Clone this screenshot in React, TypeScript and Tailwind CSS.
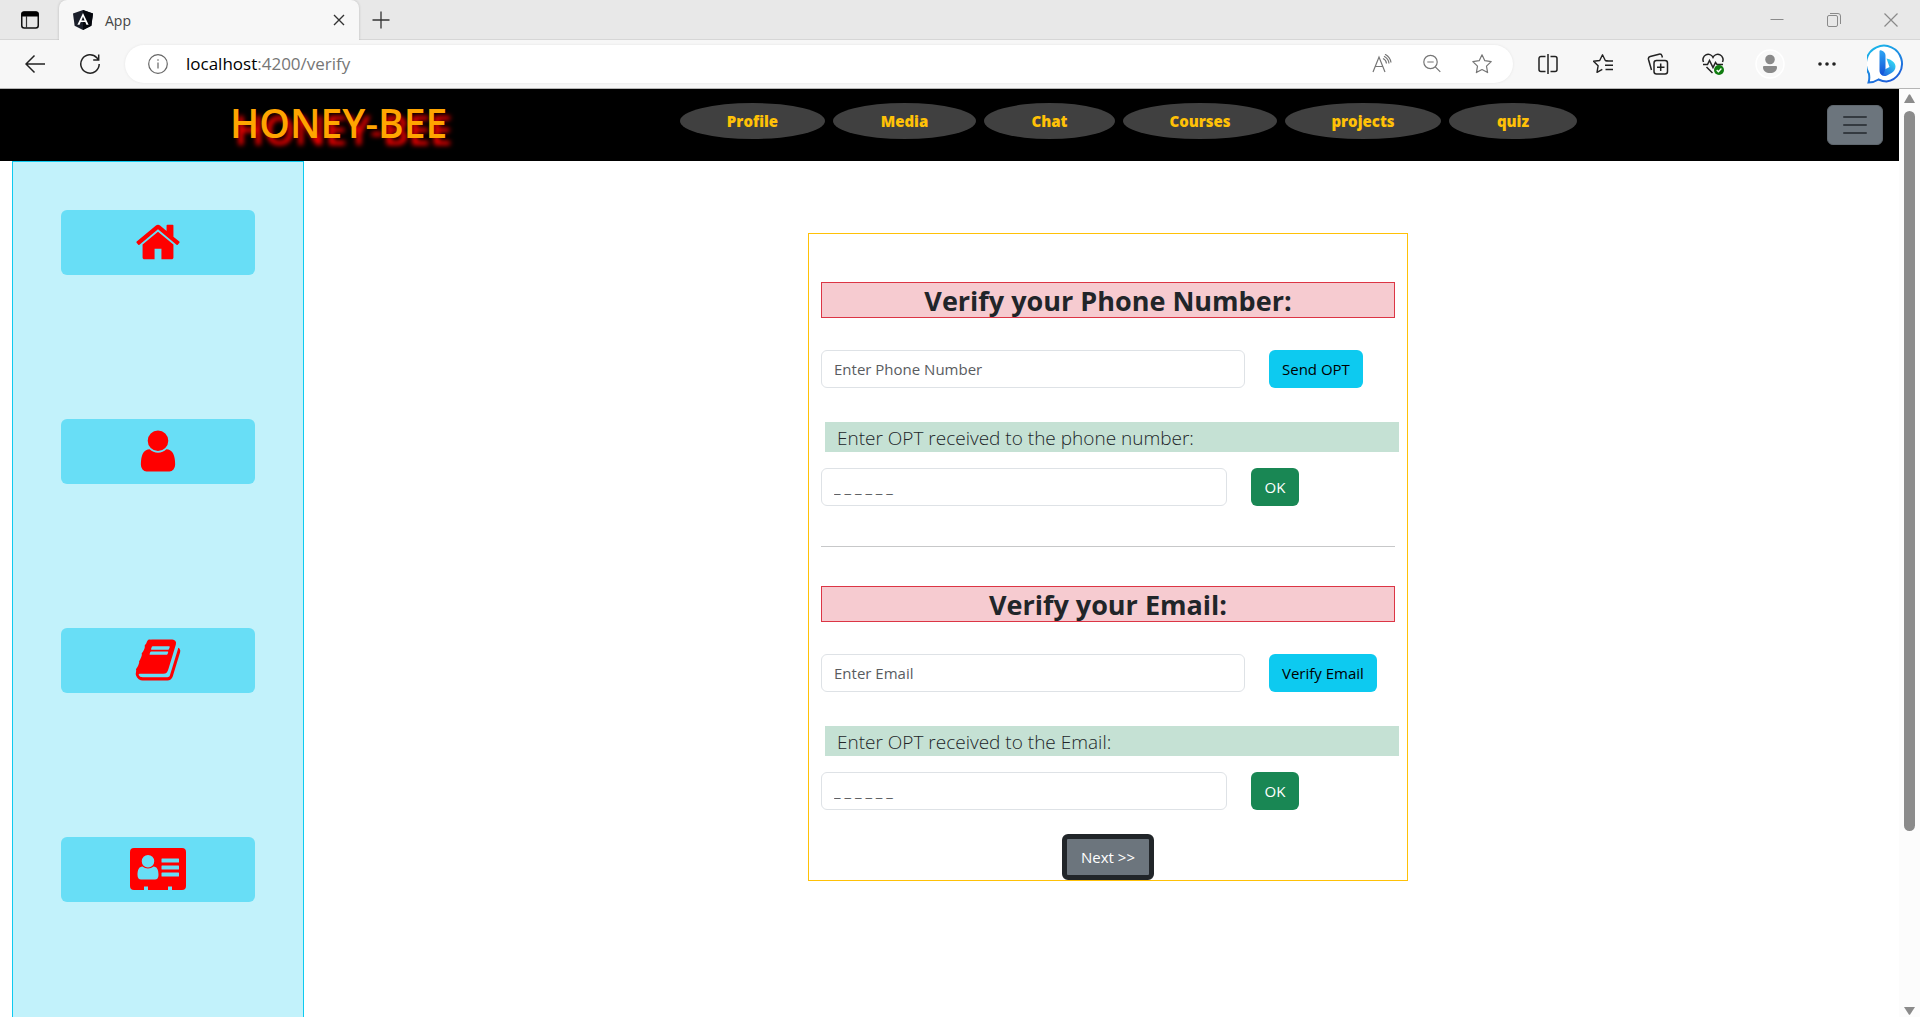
import { useState, type ReactNode } from 'react';

const navItems = [
  { label: 'Profile', width: 'w-[145px]' },
  { label: 'Media', width: 'w-[143px]' },
  { label: 'Chat', width: 'w-[131px]' },
  { label: 'Courses', width: 'w-[154px]' },
  { label: 'projects', width: 'w-[156px]' },
  { label: 'quiz', width: 'w-[128px]' },
];

function IconButton({ label, className = '', children }: { label: string; className?: string; children: ReactNode }) {
  return (
    <button type="button" aria-label={label} className={`flex shrink-0 items-center justify-center ${className}`}>
      {children}
    </button>
  );
}

function TabStrip() {
  return (
    <div className="flex h-10 items-stretch bg-[#e8e8e8]">
      <IconButton label="Tab actions" className="w-[59px] border-b border-[#d6d6d6]">
        <svg width="18" height="18" viewBox="0 0 18 18" fill="none">
          <rect x="0.75" y="1" width="16.5" height="16" rx="2.5" stroke="#111" strokeWidth="1.5" />
          <path d="M0.5 5.5V3A2.5 2.5 0 0 1 3 0.5h12A2.5 2.5 0 0 1 17.5 3v2.5z" fill="#000" />
          <path d="M5.5 5v12" stroke="#333" strokeWidth="1.2" />
        </svg>
      </IconButton>
      <div className="flex w-[300px] items-center rounded-t-lg bg-[#f7f7f7] px-3 shadow-[0_0_3px_rgba(0,0,0,0.2)] [clip-path:inset(0_-4px_0_-4px)]">
        <svg width="24" height="20" viewBox="0 0 24 20">
          <path d="M12 0l10 3.4-1.6 12.4L12 20l-8.4-4.2L2 3.4z" fill="#1b1f2a" />
          <path d="M12 0l10 3.4-1.6 12.4L12 20z" fill="#05070d" />
          <path d="M12 3L6.400 14.800h2.200l1.100-2.700h4.600l1.100 2.700h2.200zm0 3.800l1.600 3.600h-3.200z" fill="#fff" />
        </svg>
        <span className="ml-2.5 flex-1 font-['Open_Sans',sans-serif] text-[14px] text-[#444]">App</span>
        <IconButton label="Close tab" className="size-4">
          <svg width="12" height="12" viewBox="0 0 12 12" stroke="#333" strokeWidth="1.4">
            <path d="M1 1l10 10M11 1L1 11" />
          </svg>
        </IconButton>
      </div>
      <div className="flex flex-1 items-center border-b border-[#d6d6d6]">
        <IconButton label="New tab" className="ml-3 size-5">
          <svg width="18" height="18" viewBox="0 0 18 18" stroke="#333" strokeWidth="1.3">
            <path d="M9 0.500v17M0.500 9h17" />
          </svg>
        </IconButton>
        <div className="ml-auto flex items-center gap-[43px] pr-[22px]">
          <IconButton label="Minimize" className="size-[14px]">
            <svg width="14" height="14" viewBox="0 0 14 14" stroke="#8a8a8a">
              <path d="M0.500 6.500h13" />
            </svg>
          </IconButton>
          <IconButton label="Restore" className="size-[14px]">
            <svg width="14" height="14" viewBox="0 0 14 14" fill="none" stroke="#8a8a8a">
              <rect x="0.500" y="2.500" width="10" height="11" rx="1.500" />
              <path d="M3 0.500H11A2.500 2.500 0 0 1 13.500 3v8" />
            </svg>
          </IconButton>
          <IconButton label="Close" className="size-[14px]">
            <svg width="14" height="14" viewBox="0 0 14 14" stroke="#8a8a8a" strokeWidth="1.2">
              <path d="M0.500 0.500l13 13M13.500 0.500l-13 13" />
            </svg>
          </IconButton>
        </div>
      </div>
    </div>
  );
}

function Toolbar() {
  const [url, setUrl] = useState('localhost:4200/verify');
  const split = url.indexOf(':');
  return (
    <div className="flex h-[49px] items-center border-b border-[#b5b5b5] bg-[#f7f7f7]">
      <IconButton label="Back" className="ml-6 size-[22px]">
        <svg width="20" height="20" viewBox="0 0 20 20" fill="none" stroke="#222" strokeWidth="1.5">
          <path d="M20 10H1M9.500 1.500L1 10l8.500 8.500" />
        </svg>
      </IconButton>
      <IconButton label="Refresh" className="ml-[33px] size-[22px]">
        <svg width="22" height="22" viewBox="0 0 22 22" fill="none" stroke="#222" strokeWidth="1.5">
          <path d="M20.200 11A9.200 9.200 0 1 1 17.800 4.800L19.500 6.800M19.700 1.500v5.500h-5.500" />
        </svg>
      </IconButton>
      <div className="ml-6 flex h-[38px] flex-1 items-center rounded-full bg-white pr-[21px] pl-[22px] shadow-[0_0_3px_rgba(0,0,0,0.08)]">
        <IconButton label="Site information" className="size-[22px]">
          <svg width="20" height="20" viewBox="0 0 20 20" fill="none" stroke="#666" strokeWidth="1.2">
            <circle cx="10" cy="10" r="9.3" />
            <path d="M10 8.500V14.500M10 5.300v1.500" />
          </svg>
        </IconButton>
        <div className="relative ml-[17px] h-6 flex-1 font-['Open_Sans',sans-serif] text-[17px] leading-6">
          <span aria-hidden="true" className="text-black">{url.slice(0, split)}</span>
          <span aria-hidden="true" className="text-[#767676]">{url.slice(split)}</span>
          <input
            aria-label="Address"
            value={url}
            onChange={(e) => setUrl(e.target.value)}
            className="absolute inset-0 w-full bg-transparent text-transparent caret-black outline-none"
          />
        </div>
        <div className="flex items-center gap-[30px]">
          <IconButton label="Read aloud" className="size-5">
            <svg width="20" height="20" viewBox="0 0 20 20" fill="none" stroke="#767676" strokeWidth="1.2">
              <path d="M1 18L7 3l6 15M3.200 12.500h7.600" />
              <path d="M11 4.500a6 6 0 0 1 3.500 5M12 2.200a9 9 0 0 1 5 7.300M13 0.300a11 11 0 0 1 6 8.200" />
            </svg>
          </IconButton>
          <IconButton label="Zoom out" className="size-5">
            <svg width="20" height="20" viewBox="0 0 20 20" fill="none" stroke="#767676" strokeWidth="1.2">
              <circle cx="8.500" cy="8" r="6.700" />
              <path d="M13.300 12.800l5 5M5.300 8h6.400" />
            </svg>
          </IconButton>
          <IconButton label="Add to favorites" className="size-5">
            <svg width="20" height="20" viewBox="0 0 20 20" fill="none" stroke="#767676" strokeWidth="1.2" strokeLinejoin="round">
              <path d="M10 0.800l2.800 5.900 6.400.9-4.700 4.500 1.100 6.500L10 15.500l-5.600 3.100 1.100-6.500L.8 7.600l6.400-.9z" />
            </svg>
          </IconButton>
        </div>
      </div>
      <div className="ml-[25px] flex items-center gap-[35px]">
        <IconButton label="Split screen" className="size-5">
          <svg width="20" height="20" viewBox="0 0 20 20" fill="none" stroke="#222" strokeWidth="1.5">
            <path d="M7.500 2.500H3A2 2 0 0 0 1 4.500v11a2 2 0 0 0 2 2h4.500M12.500 2.500H17a2 2 0 0 1 2 2v11a2 2 0 0 1-2 2h-4.500M10 0v20" />
          </svg>
        </IconButton>
        <IconButton label="Favorites" className="size-5">
          <svg width="20" height="20" viewBox="0 0 20 20" fill="none" stroke="#222" strokeWidth="1.4" strokeLinejoin="round">
            <path d="M15.500 7l-3.200-.5L9.500.8 6.700 6.500.5 7.300l4.600 4.500-1.100 6.500 5.300-2.900M12.500 7h7.500M12 11.300h8M12.500 15.500h7.500" />
          </svg>
        </IconButton>
        <IconButton label="Collections" className="size-5">
          <svg width="22" height="22" viewBox="0 0 22 22" fill="none" stroke="#222" strokeWidth="1.5" className="shrink-0">
            <rect x="7" y="7.500" width="13.500" height="13.500" rx="2.500" />
            <path d="M13.700 10.500v7.500M10 14.200h7.500M4.500 17L1.500 6.500a2.500 2.500 0 0 1 1.700-3L12 1.200a2.500 2.500 0 0 1 3 1.700l.4 1.600" />
          </svg>
        </IconButton>
        <IconButton label="Browser essentials" className="size-5">
          <svg width="22" height="22" viewBox="0 0 22 22" fill="none" stroke="#222" strokeWidth="1.5" className="shrink-0">
            <path d="M1.500 9A5 5 0 0 1 11 4.300 5 5 0 0 1 20.500 9M1 11.500h4.500l2-4 3.500 7 2.500-5 1.500 2h6M4.500 14l6 6" />
            <circle cx="17" cy="17" r="5" fill="#107c10" stroke="none" />
            <path d="M14.700 17l1.700 1.700 3-3.200" stroke="#fff" strokeWidth="1.3" />
          </svg>
        </IconButton>
        <IconButton label="Account" className="ml-0.5 size-5">
          <svg width="30" height="30" viewBox="0 0 30 30" className="shrink-0">
            <circle cx="15" cy="15" r="14" fill="#f9f9f9" stroke="#fff" strokeWidth="1.5" />
            <circle cx="15" cy="10.500" r="4.800" fill="#8a8a8a" />
            <path d="M9 17h12a1 1 0 0 1 1 1c0 4-3 6-7 6s-7-2-7-6a1 1 0 0 1 1-1z" fill="#8a8a8a" />
          </svg>
        </IconButton>
        <IconButton label="Settings and more" className="ml-0.5 size-5">
          <svg width="18" height="4" viewBox="0 0 18 4" fill="#222">
            <circle cx="2" cy="2" r="1.800" />
            <circle cx="9" cy="2" r="1.800" />
            <circle cx="16" cy="2" r="1.800" />
          </svg>
        </IconButton>
      </div>
      <IconButton label="Bing" className="mr-3.5 ml-[30px] h-[42px] w-[39px]">
        <svg width="39" height="42" viewBox="0 0 39 42" fill="none">
          <defs>
            <linearGradient id="bubble" x1="8" y1="2" x2="30" y2="40" gradientUnits="userSpaceOnUse">
              <stop stopColor="#1bb8ea" />
              <stop offset="1" stopColor="#1f52d8" />
            </linearGradient>
            <linearGradient id="stem" x1="14" y1="8" x2="16" y2="32" gradientUnits="userSpaceOnUse">
              <stop stopColor="#2ba4f4" />
              <stop offset="1" stopColor="#1450d6" />
            </linearGradient>
            <linearGradient id="bowl" x1="28" y1="18" x2="16" y2="32" gradientUnits="userSpaceOnUse">
              <stop stopColor="#35dcf5" />
              <stop offset="1" stopColor="#2066e0" />
            </linearGradient>
          </defs>
          <path d="M1.500 39.500c1-3 1-6 .4-9A18 18 0 1 1 19.500 38.500c-3 0-5.500-.8-8-2-3 2-6.500 3-10 3z" fill="#fff" stroke="url(#bubble)" strokeWidth="2" />
          <path d="M19.500 15.500c5 1 9 4 9 8 0 3-1.500 5-4 6.500L20 32.500c-4 1.500-7-.5-7-3.500l9.500-5z" fill="url(#bowl)" />
          <path d="M12.500 8.200c0-1 1-1.200 2-.7 2.500 1 4 2.500 4 5V26l-2.500 6c-2-.5-3.500-2-3.500-4z" fill="url(#stem)" />
        </svg>
      </IconButton>
    </div>
  );
}

function SiteHeader() {
  return (
    <header className="flex h-[72px] items-start bg-black pr-4 pl-[230px]">
      <h1 className="w-[450px] pt-2 font-['Open_Sans',sans-serif] text-[39px] leading-[52px] font-semibold text-[#ffa500] [text-shadow:5px_7px_5px_#ff0000]">
        HONEY-BEE
      </h1>
      <nav className="flex gap-2 pt-[14px]">
        {navItems.map((item) => (
          <a
            key={item.label}
            href={`#${item.label.toLowerCase()}`}
            className={`flex h-9 items-center justify-center rounded-[50%] bg-[#404040] font-['Open_Sans',sans-serif] text-[15px] font-extrabold text-[#ffc107] ${item.width}`}
          >
            {item.label}
          </a>
        ))}
      </nav>
      <button type="button" aria-label="Toggle menu" className="mt-4 ml-auto flex h-10 w-14 items-center justify-center rounded-md border border-[#5f676e] bg-[#6c757d]">
        <svg width="24" height="18" viewBox="0 0 24 18" stroke="#343a40" strokeWidth="2" strokeLinecap="round">
          <path d="M1 1h22M1 9h22M1 17h22" />
        </svg>
      </button>
    </header>
  );
}

const shortcuts = [
  {
    label: 'Home',
    icon: (
      <path d="M1472 992v480q0 26-19 45t-45 19h-384v-384h-256v384h-384q-26 0-45-19t-19-45v-480q0-1 .5-3t.5-3l575-474 575 474q1 2 1 6zm223-69l-62 74q-8 9-21 11h-3q-13 0-21-7l-692-577-692 577q-12 8-24 7-13-2-21-11l-62-74q-8-10-7-23.5t11-21.5l719-599q32-26 76-26t76 26l244 204v-195q0-14 9-23t23-9h192q14 0 23 9t9 23v408l219 182q10 8 11 21.5t-7 23.5z" />
    ),
  },
  {
    label: 'User',
    icon: (
      <path d="M1536 1399q0 109-62.5 187t-150.5 78h-854q-88 0-150.5-78t-62.5-187q0-85 8.5-160.5t31.5-152 58.5-131 94-89 134.5-34.5q131 128 313 128t313-128q76 0 134.5 34.5t94 89 58.5 131 31.5 152 8.5 160.5zm-256-887q0 159-112.5 271.5t-271.5 112.5-271.5-112.5-112.5-271.5 112.5-271.5 271.5-112.5 271.5 112.5 112.5 271.5z" />
    ),
  },
  {
    label: 'Book',
    icon: (
      <path d="M1703 478q40 57 18 129l-275 906q-19 64-76.5 107.5t-122.5 43.5h-923q-77 0-148.5-53.5t-99.5-131.5q-24-67-2-127 0-4 3-27t4-37q1-8-3-21.5t-3-19.5q2-11 8-21t16.5-23.5 16.5-23.5q23-38 45-91.5t30-91.5q3-10 .5-30t-.5-28q3-11 17-28t17-23q21-36 42-92t25-90q1-9-2.5-32t.5-28q4-13 22-30.5t22-22.5q19-26 42.500-84.500t27.500-96.500q1-8-3-25.500t-2-26.500q2-8 9-18t18-23 17-21q8-12 16.500-30.500t15-35 16-36 19.500-32 26.500-23.500 36-11.500 47.500 5.500l-1 3q38-9 51-9h761q74 0 114 56t18 130l-274 906q-36 119-71.500 153.500t-128.500 34.500h-869q-27 0-38 15-11 16-1 43 24 70 144 70h923q29 0 56-15.500t35-41.500l300-987q7-22 5-57 38 15 59 43zm-1064 2q-4 13 2 22.500t20 9.500h608q13 0 25.500-9.500t16.500-22.500l21-64q4-13-2-22.500t-20-9.500h-608q-13 0-25.500 9.500t-16.500 22.500zm-56 192q-4 13 2 22.500t20 9.500h608q13 0 25.500-9.500t16.500-22.500l21-64q4-13-2-22.500t-20-9.500h-608q-13 0-25.500 9.500t-16.500 22.500z" transform="translate(0 0)" />
    ),
  },
  {
    label: 'Contact card',
    viewBox: '0 -3 56 48',
    width: 'w-14',
    icon: (
      <path
        fillRule="evenodd"
        d="M4 0h48a4 4 0 0 1 4 4v34a4 4 0 0 1-4 4h-10v-3.500h-4V42H18v-3.500h-4V42H4a4 4 0 0 1-4-4V4a4 4 0 0 1 4-4zM18 7a6 6 0 1 0 0 12.500A6 6 0 0 0 18 7zM12.500 18.500C9 18.500 7.500 22 7.500 27c0 3 1.500 4.500 3.500 4.500h14c2 0 3.500-1.500 3.500-4.500 0-5-1.500-8.500-5-8.500-3 2.500-8 2.500-11 0zM32 10.500h16.500a.5.5 0 0 1 .5.5v3a.5.5 0 0 1-.5.5H32a.5.5 0 0 1-.5-.5v-3a.5.5 0 0 1 .5-.5zM32 17.500h16.500a.5.5 0 0 1 .5.5v3a.5.5 0 0 1-.5.5H32a.5.5 0 0 1-.5-.5v-3a.5.5 0 0 1 .5-.5zM32 24.500h16.500a.5.5 0 0 1 .5.5v3a.5.5 0 0 1-.5.5H32a.5.5 0 0 1-.5-.5v-3a.5.5 0 0 1 .5-.5z"
      />
    ),
  },
];

function Sidebar() {
  return (
    <aside className="ml-3 flex w-[292px] shrink-0 flex-col gap-36 overflow-hidden border border-[#0dcaf0] border-b-0 bg-[#c2f2fb] px-12 pt-12">
      {shortcuts.map((s) => (
        <button key={s.label} type="button" aria-label={s.label} className="flex h-[65px] shrink-0 items-center justify-center rounded-md bg-[#68def6] pb-0.5 text-[#ff0000]">
          <svg viewBox={s.viewBox ?? '0 0 1792 1792'} fill="currentColor" className={`h-12 ${s.width ?? 'w-12'}`}>
            {s.icon}
          </svg>
        </button>
      ))}
    </aside>
  );
}

interface SectionProps {
  id: string;
  title: string;
  placeholder: string;
  action: string;
  codeLabel: string;
}

function VerifySection({ id, title, placeholder, action, codeLabel }: SectionProps) {
  const field = 'h-[38px] rounded-md border border-[#dee2e6] bg-white px-3 text-[15px] text-[#212529] placeholder:text-[#595c5f]';
  return (
    <section>
      <h2 className="border border-[#dc3545] bg-[#f6cbd0] pt-0.5 text-center text-[27px] leading-8 font-bold">{title}</h2>
      <div className="mt-8 flex gap-6">
        <input type="text" aria-label={placeholder} placeholder={placeholder} className={`w-[424px] ${field}`} />
        <button type="button" className="h-[38px] rounded-md bg-[#0dcaf0] px-[13px] text-[15px] text-black">{action}</button>
      </div>
      <label htmlFor={id} className="mt-[34px] -mr-1 ml-1 block bg-[#c5e1d4] px-3 pt-0.5 text-[19px] leading-7 font-light">{codeLabel}</label>
      <div className="mt-4 flex gap-6">
        <input id={id} type="text" placeholder="_ _ _ _ _ _" className={`w-[406px] ${field}`} />
        <button type="button" className="h-[38px] w-12 rounded-md bg-[#198754] text-[15px] text-white">OK</button>
      </div>
    </section>
  );
}

function Scrollbar() {
  return (
    <div aria-hidden="true" className="flex w-[21px] shrink-0 flex-col items-center bg-[#fcfcfc] pt-[5px] pb-0.5">
      <svg width="11" height="9" viewBox="0 0 11 9" fill="#8b8b8b">
        <path d="M4.700.8a1 1 0 0 1 1.600 0L11 9H0z" />
      </svg>
      <div className="mt-2 w-[11px] flex-[720] rounded-full bg-[#8b8b8b]" />
      <div className="flex-[176]" />
      <svg width="11" height="8" viewBox="0 0 11 8" fill="#8b8b8b">
        <path d="M4.700 7.300a1 1 0 0 0 1.600 0L11 0H0z" />
      </svg>
    </div>
  );
}

export default function App() {
  return (
    <div className="flex h-screen flex-col overflow-hidden bg-white">
      <TabStrip />
      <Toolbar />
      <div className="flex min-h-0 flex-1">
        <div className="flex min-w-0 flex-1 flex-col">
          <SiteHeader />
          <div className="flex min-h-0 flex-1">
            <Sidebar />
            <main className="flex flex-1 items-start justify-center pt-[72px] pl-[13px] font-['Open_Sans',sans-serif] text-[#212529]">
              <form className="w-[600px] border border-[#ffc107] px-3 pt-12" onSubmit={(e) => e.preventDefault()}>
                <VerifySection
                  id="phone-code"
                  title="Verify your Phone Number:"
                  placeholder="Enter Phone Number"
                  action="Send OPT"
                  codeLabel="Enter OPT received to the phone number:"
                />
                <hr className="mt-10 mb-[39px] border-[#c7c8c9]" />
                <VerifySection
                  id="email-code"
                  title="Verify your Email:"
                  placeholder="Enter Email"
                  action="Verify Email"
                  codeLabel="Enter OPT received to the Email:"
                />
                <div className="mt-6 flex justify-center">
                  <button type="submit" className="h-[46px] rounded-md border-[5px] border-[#212529] bg-[#6c757d] px-3.5 text-[15px] text-white">
                    Next &gt;&gt;
                  </button>
                </div>
              </form>
            </main>
          </div>
        </div>
        <Scrollbar />
      </div>
    </div>
  );
}
